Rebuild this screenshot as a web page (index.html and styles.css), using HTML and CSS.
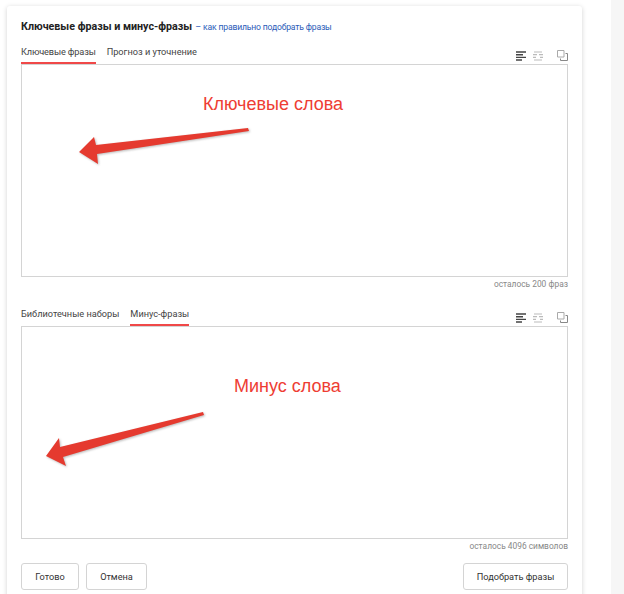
FILE: index.html
```html
<!DOCTYPE html>
<html lang="ru">
<head>
    <meta charset="UTF-8">
    <title>Ключевые фразы и минус-фразы</title>
    <link rel="stylesheet" href="styles.css">
</head>
<body>
    <div class="page">
        <div class="card">
            <div class="title-row">
                <span class="title">Ключевые фразы и минус-фразы</span>
                <span class="dash">–</span>
                <a class="help-link">как правильно подобрать фразы</a>
            </div>

            <div class="tabs-row">
                <div class="tabs">
                    <span class="tab active tab-keys">Ключевые фразы</span>
                    <span class="tab">Прогноз и уточнение</span>
                </div>
                <div class="tools">
                    <svg class="tool" viewBox="0 0 10 10" width="10" height="10"><path d="M0 1h10M0 3.7h7M0 6.4h10M0 9h6" stroke="#444" stroke-width="1.4" fill="none"/></svg>
                    <svg class="tool" viewBox="0 0 10 10" width="10" height="10"><path d="M1 1h8M0 3.7h4M6 3.7h4M0 6.4h3M7 6.4h3M1 9h8" stroke="#bbb" stroke-width="1.2" fill="none"/></svg>
                    <svg class="tool tool-last" viewBox="0 0 11 11" width="11" height="11"><path d="M.5.5h6.5v6.5H.5z" stroke="#aaa" fill="none"/><path d="M8.5 3.5h2v7h-7v-2" stroke="#888" fill="none"/></svg>
                </div>
            </div>
            <div class="field">
                <span class="note note-keys">Ключевые слова</span>
                <svg class="arrow" viewBox="0 0 547 213" width="547" height="213">
                    <polygon class="arrow-body" points="58,88 73,73 75,81 227,64 228,67 76,90 77,100"/>
                </svg>
            </div>
            <div class="remain">осталось 200 фраз</div>

            <div class="tabs-row tabs-second">
                <div class="tabs">
                    <span class="tab">Библиотечные наборы</span>
                    <span class="tab active">Минус-фразы</span>
                </div>
                <div class="tools">
                    <svg class="tool" viewBox="0 0 10 10" width="10" height="10"><path d="M0 1h10M0 3.7h7M0 6.4h10M0 9h6" stroke="#444" stroke-width="1.4" fill="none"/></svg>
                    <svg class="tool" viewBox="0 0 10 10" width="10" height="10"><path d="M1 1h8M0 3.7h4M6 3.7h4M0 6.4h3M7 6.4h3M1 9h8" stroke="#bbb" stroke-width="1.2" fill="none"/></svg>
                    <svg class="tool tool-last" viewBox="0 0 11 11" width="11" height="11"><path d="M.5.5h6.5v6.5H.5z" stroke="#aaa" fill="none"/><path d="M8.5 3.5h2v7h-7v-2" stroke="#888" fill="none"/></svg>
                </div>
            </div>
            <div class="field">
                <span class="note note-minus">Минус слова</span>
                <svg class="arrow" viewBox="0 0 547 213" width="547" height="213">
                    <polygon class="arrow-body" points="25,130 38,112 39,121 182,86 183,89 42,131 45,140"/>
                </svg>
            </div>
            <div class="remain">осталось 4096 символов</div>

            <div class="actions">
                <button class="btn btn-done">Готово</button>
                <button class="btn btn-cancel">Отмена</button>
                <button class="btn btn-pick">Подобрать фразы</button>
            </div>
        </div>
        <div class="side"></div>
    </div>
</body>
</html>
```

FILE: styles.css
```css
html, body {
    margin: 0;
    height: 594px;
    overflow: hidden;
    background: #fff;
    font-family: Roboto, "Open Sans", sans-serif;
    color: #333;
}
.page {
    display: flex;
    height: 594px;
    overflow: hidden;
}
.card {
    box-sizing: border-box;
    flex: none;
    width: 575px;
    height: 620px;
    margin: 6px 0 0 7px;
    padding: 14px 14px 0;
    background: #fff;
    border-radius: 3px;
    box-shadow: 0 1px 5px rgba(0,0,0,0.18);
}
.side {
    width: 13px;
    margin-left: auto;
    background: #f6f6f6;
}
.title-row {
    display: flex;
    align-items: baseline;
    height: 14px;
    font-size: 10.7px;
    line-height: 14px;
}
.title {
    font-weight: 700;
    color: #222;
}
.dash {
    margin: 0 2px 0 3px;
    font-size: 9px;
    color: #2a5bb8;
}
.help-link {
    font-size: 8.6px;
    letter-spacing: -0.17px;
    color: #2a5bb8;
}
.tabs-row {
    display: flex;
    justify-content: space-between;
    align-items: flex-end;
    height: 25px;
    margin-top: 5px;
}
.tabs-second {
    margin-top: 9px;
}
.tabs {
    display: flex;
    gap: 11px;
}
.tab {
    height: 19px;
    font-size: 9.2px;
    line-height: 14px;
    color: #444;
}
.tab.active {
    height: 17px;
    border-bottom: 2px solid #f04848;
}
.tab-keys {
    letter-spacing: -0.15px;
}
.tools {
    display: flex;
    align-items: center;
    gap: 7px;
    padding-bottom: 3px;
}
.tool-last {
    margin-left: 7px;
}
.field {
    position: relative;
    box-sizing: border-box;
    height: 213px;
    border: 1px solid #d4d4d4;
}
.arrow {
    position: absolute;
    left: -1px;
    top: -1px;
}
.arrow-body {
    fill: #e53a2f;
    filter: drop-shadow(1px 1px 1px rgba(60,60,60,0.35));
}
.note {
    position: absolute;
    font-family: "Liberation Sans", Arial, sans-serif;
    font-size: 18px;
    line-height: 22px;
    color: #ee3d33;
    white-space: nowrap;
}
.note-keys {
    left: 181px;
    top: 28px;
}
.note-minus {
    left: 212px;
    top: 48px;
}
.remain {
    height: 15px;
    font-size: 8.4px;
    line-height: 15px;
    text-align: right;
    color: #888;
}
.actions {
    display: flex;
    gap: 7px;
    margin-top: 9px;
}
.btn {
    box-sizing: border-box;
    height: 27px;
    padding: 0;
    background: #fff;
    border: 1px solid #d4d4d4;
    border-radius: 3px;
    font-family: inherit;
    font-size: 9.2px;
    color: #333;
}
.btn-done {
    width: 58px;
}
.btn-cancel {
    width: 61px;
}
.btn-pick {
    width: 105px;
    margin-left: auto;
}
```
